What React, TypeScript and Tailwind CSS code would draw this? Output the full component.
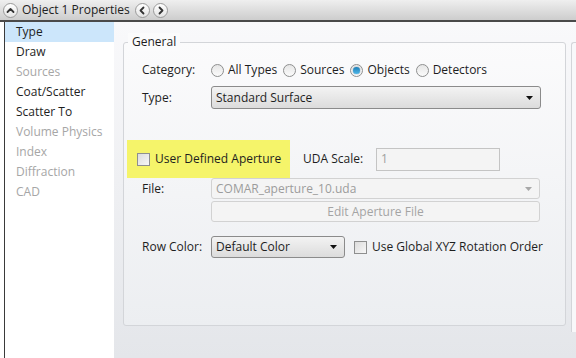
import React from "react";

const F = { fontFamily: '"Open Sans", "Noto Sans", sans-serif' };

function Radio({ checked }: { checked?: boolean }) {
  return (
    <span className="relative inline-flex h-[13px] w-[13px] items-center justify-center rounded-full border border-[#8e8f8f] bg-gradient-to-b from-[#e6e6e6] to-[#fbfbfb]">
      {checked && (
        <span className="h-[7px] w-[7px] rounded-full bg-gradient-to-b from-[#1b7fb8] to-[#4fb7e8] shadow-[0_0_1px_#0c4a73]" />
      )}
    </span>
  );
}

function Check() {
  return (
    <span className="inline-block h-[13px] w-[13px] border border-[#8e8f8f] bg-gradient-to-br from-[#dcdcdc] to-[#f7f7f7]" />
  );
}

function Arrow({ color = "#111" }: { color?: string }) {
  return (
    <svg width="7" height="4" viewBox="0 0 7 4">
      <path d="M0 0 H7 L3.5 4 Z" fill={color} />
    </svg>
  );
}

function CircleBtn({ dir }: { dir: "up" | "left" | "right" }) {
  const d =
    dir === "up" ? "M3.5 8 L6.5 5 L9.5 8" : dir === "left" ? "M7.5 3.5 L4.5 6.5 L7.5 9.5" : "M5.5 3.5 L8.5 6.5 L5.5 9.5";
  return (
    <span className="inline-flex h-[15px] w-[15px] items-center justify-center rounded-full border border-[#9a9a9a] bg-gradient-to-b from-white to-[#e4e4e4]">
      <svg width="13" height="13" viewBox="0 0 13 13">
        <path d={d} fill="none" stroke="#333" strokeWidth="1.8" strokeLinecap="round" strokeLinejoin="round" />
      </svg>
    </span>
  );
}

const items: [string, boolean][] = [
  ["Type", true],
  ["Draw", true],
  ["Sources", false],
  ["Coat/Scatter", true],
  ["Scatter To", true],
  ["Volume Physics", false],
  ["Index", false],
  ["Diffraction", false],
  ["CAD", false],
];

export default function App() {
  return (
    <div className="flex h-[358px] w-[576px] flex-col overflow-hidden bg-white text-[12px] text-[#1e1e1e]" style={F}>
      {/* Title bar */}
      <div className="flex h-[22px] items-center border-b-2 border-[#4a4a4a] bg-gradient-to-b from-[#efefef] to-[#cdcdcd] pl-[3px]">
        <CircleBtn dir="up" />
        <span className="ml-[4px] text-[12px] text-[#222]">Object 1 Properties</span>
        <span className="ml-[5px] flex gap-[3px]">
          <CircleBtn dir="left" />
          <CircleBtn dir="right" />
        </span>
      </div>
      {/* Body */}
      <div className="flex flex-1">
        <div className="w-[114px] bg-white pl-[4px]">
          <div className="h-full border-l border-[#3a3a3a]">
            {items.map(([t, en], i) => (
              <div
                key={t}
                className={`flex h-[20px] items-center pl-[11px] ${i === 0 ? "bg-[#cce6fb]" : ""} ${en ? "text-[#1e1e1e]" : "text-[#a6a6a6]"}`}
              >
                {t}
              </div>
            ))}
          </div>
        </div>
        <div className="flex flex-1 bg-gradient-to-b from-[#f9f9fb] to-[#e4e6ea] pl-[9px] pt-[20px]">
          <div className="relative h-[284px] w-[443px] rounded-[3px] border border-[#d3d5d9] bg-gradient-to-b from-[#fbfbfc] to-[#eceef1]">
            <span className="absolute left-[4px] top-[-10px] bg-[#fbfbfc] px-[4px] text-[#1e1e1e]">General</span>
            {/* Category */}
            <div className="mt-[17px] flex h-[20px] items-center">
              <span className="w-[87px] pl-[18px]">Category:</span>
              <span className="flex items-center">
                <Radio />
                <span className="ml-[4px] mr-[6px]">All Types</span>
                <Radio />
                <span className="ml-[4px] mr-[6px]">Sources</span>
                <Radio checked />
                <span className="ml-[4px] mr-[6px]">Objects</span>
                <Radio />
                <span className="ml-[4px]">Detectors</span>
              </span>
            </div>
            {/* Type */}
            <div className="mt-[6px] flex h-[23px] items-center">
              <span className="w-[87px] pl-[18px]">Type:</span>
              <div className="flex h-[23px] w-[330px] items-center justify-between rounded-[3px] border border-[#8b8b8b] bg-gradient-to-b from-[#f3f3f3] to-[#dcdcdc] pl-[4px] pr-[7px]">
                <span>Standard Surface</span>
                <Arrow />
              </div>
            </div>
            {/* UDA */}
            <div className="mt-[31px] flex h-[38px] items-start">
              <div className="ml-[3px] flex h-[38px] w-[163px] items-center bg-[#f5f46a] pl-[10px]">
                <Check />
                <span className="ml-[5px] text-[#1e1e1e]">User Defined Aperture</span>
              </div>
              <div className="ml-[13px] flex h-[38px] items-center">
                <span className="w-[73px]">UDA Scale:</span>
                <div className="flex h-[23px] w-[124px] items-center border border-[#c4c4c4] bg-[#f4f4f4] pl-[4px] text-[#a0a0a0]">1</div>
              </div>
            </div>
            {/* File */}
            <div className="flex h-[21px] items-center">
              <span className="w-[87px] pl-[18px]">File:</span>
              <div className="flex h-[21px] w-[329px] items-center justify-between rounded-[3px] border border-[#d2d2d2] bg-[#f4f4f4] pl-[4px] pr-[7px] text-[#9c9c9c]">
                <span>COMAR_aperture_10.uda</span>
                <Arrow color="#a8a8a8" />
              </div>
            </div>
            {/* Edit */}
            <div className="mt-[2px] flex h-[21px] items-center pl-[87px]">
              <div className="flex h-[21px] w-[329px] items-center justify-center rounded-[3px] border border-[#d2d2d2] bg-[#f4f4f4] text-[#a4a4a4]">
                Edit Aperture File
              </div>
            </div>
            {/* Row color */}
            <div className="mt-[14px] flex h-[22px] items-center">
              <span className="w-[87px] pl-[18px]">Row Color:</span>
              <div className="flex h-[22px] w-[134px] items-center justify-between rounded-[3px] border border-[#8b8b8b] bg-gradient-to-b from-[#f3f3f3] to-[#dcdcdc] pl-[4px] pr-[7px]">
                <span>Default Color</span>
                <Arrow />
              </div>
              <span className="ml-[9px] flex items-center">
                <Check />
                <span className="ml-[5px]">Use Global XYZ Rotation Order</span>
              </span>
            </div>
          </div>
          <div className="ml-[5px] h-[290px] flex-1 rounded-tl-[3px] border-l border-t border-[#d3d5d9] bg-[#f8f8fa]" />
        </div>
      </div>
    </div>
  );
}
